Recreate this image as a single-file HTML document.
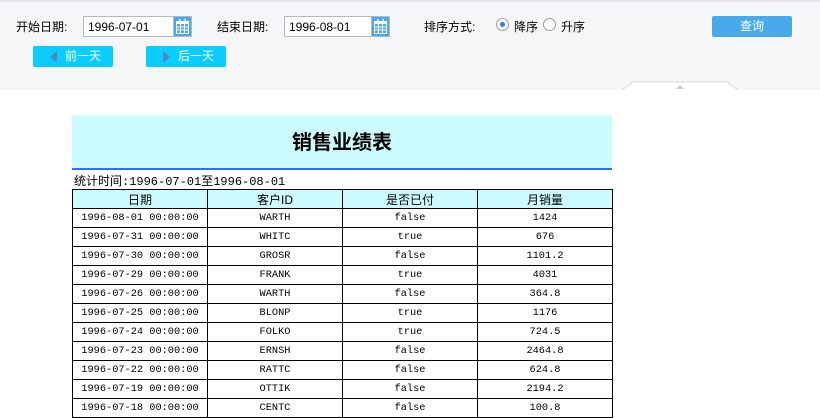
<!DOCTYPE html>
<html><head><meta charset="utf-8"><style>
*{margin:0;padding:0;box-sizing:border-box}
body{width:820px;height:408px;overflow:hidden;background:#fff;font-family:"Liberation Sans","Noto Sans CJK SC",sans-serif;position:relative}
.bar{position:absolute;left:0;top:0;width:820px;height:90px;background:#f5f6f8;border-top:2px solid #e6e7ea}
.abs{position:absolute}
.lbl{font-size:12px;color:#000;top:18px}
.inp{top:16px;height:21px;border:1px solid #b5b9c4;background:#fff;font-size:12px;padding:3px 0 0 4px}
.cal{top:16px;width:19px;height:21px;background:#4aa9ea;border:1px solid #b5b9c4}
.cal svg{display:block;margin:2px auto}
.nb{top:46px;width:80px;height:21px;background:#0bcdfd;border-radius:2px;color:#fff;font-size:12px;line-height:21px}
.tri{position:absolute;top:5px;width:0;height:0;border-top:6px solid transparent;border-bottom:6px solid transparent}
.radio{width:13px;height:13px;border:1px solid #999;border-radius:50%;background:#fff;top:18px}
table{border-collapse:collapse;position:absolute;left:72px;top:189px;width:541px;font-family:"Liberation Mono","WenQuanYi Zen Hei",monospace;font-size:10.3px}
td{border:1px solid #000;height:19px;text-align:center;width:135px;padding:0}
tr.h td{background:#ccfcff;font-size:12px;font-family:"Liberation Sans","Noto Sans CJK SC",sans-serif}
</style></head><body>
<div class="bar"></div>
<div class="abs lbl" style="left:16px">开始日期:</div>
<div class="abs inp" style="left:83px;width:91px">1996-07-01</div>
<div class="abs cal" style="left:173px"><svg width="13" height="15" viewBox="0 0 13 15"><rect x="0.5" y="2.5" width="12" height="12" fill="none" stroke="#fff"/><rect x="0" y="2" width="13" height="3" fill="#fff"/><rect x="3" y="0" width="1.5" height="3" fill="#fff"/><rect x="8.5" y="0" width="1.5" height="3" fill="#fff"/><path d="M4.5 5v9M8.5 5v9M1 8h11M1 11h11" stroke="#fff"/></svg></div>
<div class="abs lbl" style="left:217px">结束日期:</div>
<div class="abs inp" style="left:284px;width:88px">1996-08-01</div>
<div class="abs cal" style="left:371px"><svg width="13" height="15" viewBox="0 0 13 15"><rect x="0.5" y="2.5" width="12" height="12" fill="none" stroke="#fff"/><rect x="0" y="2" width="13" height="3" fill="#fff"/><rect x="3" y="0" width="1.5" height="3" fill="#fff"/><rect x="8.5" y="0" width="1.5" height="3" fill="#fff"/><path d="M4.5 5v9M8.5 5v9M1 8h11M1 11h11" stroke="#fff"/></svg></div>
<div class="abs lbl" style="left:424px">排序方式:</div>
<div class="abs radio" style="left:496px"><div style="position:absolute;left:3px;top:3px;width:5px;height:5px;border-radius:50%;background:#2f7de1"></div></div>
<div class="abs lbl" style="left:514px">降序</div>
<div class="abs radio" style="left:543px"></div>
<div class="abs lbl" style="left:561px">升序</div>
<div class="abs" style="left:712px;top:16px;width:80px;height:21px;background:#4aa9ea;border-radius:2px;color:#fff;font-size:12px;line-height:21px;text-align:center">查询</div>
<div class="abs nb" style="left:33px"><span class="tri" style="left:17px;border-right:7px solid #4c87c8"></span><span style="position:absolute;left:32px">前一天</span></div>
<div class="abs nb" style="left:146px"><span class="tri" style="left:17px;border-left:7px solid #4c87c8"></span><span style="position:absolute;left:32px">后一天</span></div>
<svg class="abs" style="left:622px;top:81px" width="116" height="9"><path d="M0 9L11 1H105L116 9" fill="#fff" stroke="#d8d8d8"/><path d="M54 8l4-4 4 4z" fill="#ccc"/></svg>
<div class="abs" style="left:72px;top:115px;width:540px;height:54px;background:#ccfcff;text-align:center;font-weight:bold;font-size:20px;line-height:56px">销售业绩表</div>
<div class="abs" style="left:72px;top:168px;width:540px;height:2px;background:#2f6ef5"></div>
<div class="abs" style="left:74px;top:172px;font-size:12px;font-family:'Liberation Mono','WenQuanYi Zen Hei',monospace">统计时间:1996-07-01至1996-08-01</div>
<table>
<tr class="h"><td>日期</td><td>客户ID</td><td>是否已付</td><td>月销量</td></tr>
<tr><td>1996-08-01 00:00:00</td><td>WARTH</td><td>false</td><td>1424</td></tr>
<tr><td>1996-07-31 00:00:00</td><td>WHITC</td><td>true</td><td>676</td></tr>
<tr><td>1996-07-30 00:00:00</td><td>GROSR</td><td>false</td><td>1101.2</td></tr>
<tr><td>1996-07-29 00:00:00</td><td>FRANK</td><td>true</td><td>4031</td></tr>
<tr><td>1996-07-26 00:00:00</td><td>WARTH</td><td>false</td><td>364.8</td></tr>
<tr><td>1996-07-25 00:00:00</td><td>BLONP</td><td>true</td><td>1176</td></tr>
<tr><td>1996-07-24 00:00:00</td><td>FOLKO</td><td>true</td><td>724.5</td></tr>
<tr><td>1996-07-23 00:00:00</td><td>ERNSH</td><td>false</td><td>2464.8</td></tr>
<tr><td>1996-07-22 00:00:00</td><td>RATTC</td><td>false</td><td>624.8</td></tr>
<tr><td>1996-07-19 00:00:00</td><td>OTTIK</td><td>false</td><td>2194.2</td></tr>
<tr><td>1996-07-18 00:00:00</td><td>CENTC</td><td>false</td><td>100.8</td></tr>
</table>
</body></html>
